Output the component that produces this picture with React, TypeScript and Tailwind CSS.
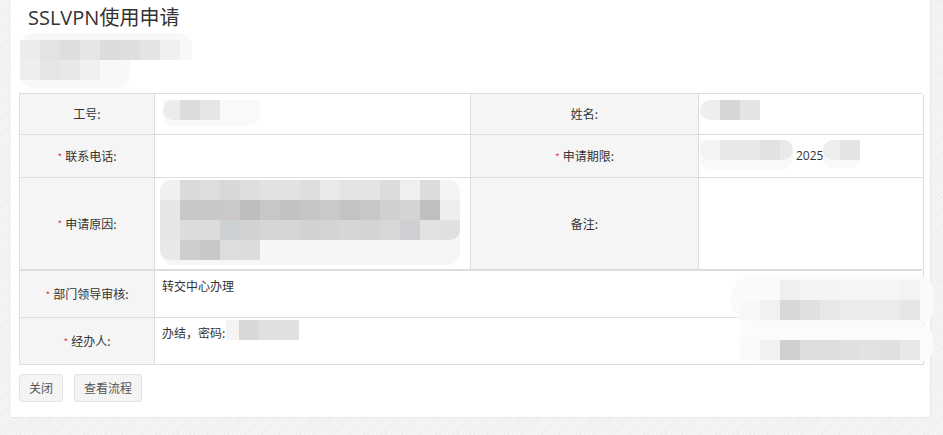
import clsx from "clsx";

// redacted areas are drawn as 20px mosaic tiles
type Cell = { c: string; w?: string };

const Strip = ({ cells, className }: { cells: Cell[]; className?: string }) => (
  <div className={clsx("flex h-[20px]", className)}>
    {cells.map((cell, i) => (
      <div key={i} className={clsx("h-[20px]", cell.w ?? "w-[20px]", cell.c)} />
    ))}
  </div>
);

const reasonRows: Cell[][] = [
  [
    { c: "bg-[#f0f0f0] rounded-tl-[10px]" }, { c: "bg-[#dadada]" }, { c: "bg-[#dcdddc]" }, { c: "bg-[#d8d8d8]" },
    { c: "bg-[#dddfdf]" }, { c: "bg-[#e2e2e2]" }, { c: "bg-[#e2e2e2]" }, { c: "bg-[#dedede]" },
    { c: "bg-[#e8eaea]" }, { c: "bg-[#e4e4e4]" }, { c: "bg-[#e4e4e4]" }, { c: "bg-[#dcdcda]" },
    { c: "bg-[#eef0f0]" }, { c: "bg-[#dcdcdc]" }, { c: "bg-[#f4f4f4] rounded-tr-[10px]" },
  ],
  [
    { c: "bg-[#e6e6e6]" }, { c: "bg-[#c8c8c8]" }, { c: "bg-[#c8c8c8]" }, { c: "bg-[#cac8c8]" },
    { c: "bg-[#bebcbc]" }, { c: "bg-[#c6c8c8]" }, { c: "bg-[#c2c0c0]" }, { c: "bg-[#c6c4c4]" },
    { c: "bg-[#c8cac8]" }, { c: "bg-[#c4c2c2]" }, { c: "bg-[#c8c8c8]" }, { c: "bg-[#d0d0d0]" },
    { c: "bg-[#d4d4d4]" }, { c: "bg-[#c0bebe]" }, { c: "bg-[#eeeef0]" },
  ],
  [
    { c: "bg-[#e6e6e6]" }, { c: "bg-[#dcdcdc]" }, { c: "bg-[#dcdcdc]" }, { c: "bg-[#cdd0d2]" },
    { c: "bg-[#d2d2d0]" }, { c: "bg-[#d6d6d6]" }, { c: "bg-[#d6d6d6]" }, { c: "bg-[#d2d2d2]" },
    { c: "bg-[#d4d4d4]" }, { c: "bg-[#d6d6d6]" }, { c: "bg-[#d2d4d6]" }, { c: "bg-[#d8d6d6]" },
    { c: "bg-[#d0ced2]" }, { c: "bg-[#e2e2e2]" }, { c: "bg-[#e0e0e0] rounded-br-[10px]" },
  ],
  [
    { c: "bg-[#e8e8e8] rounded-bl-[10px]" }, { c: "bg-[#cecece]" }, { c: "bg-[#c8c8c6]" },
    { c: "bg-[#dcdedc]" }, { c: "bg-[#dcdcdc]" },
  ],
];

const Label = ({ text, required }: { text: string; required?: boolean }) => (
  <div className="flex items-center justify-center border-r border-b border-[#dddddd] bg-[#f5f5f5] text-[12px] text-[#333]">
    {required && <span className="mr-[3px] text-[10px] text-[#e04848]">*</span>}
    {text}:
  </div>
);

export default function App() {
  return (
    <div className="min-h-screen bg-[repeating-linear-gradient(135deg,#eeeeee_0px,#eeeeee_1px,#f5f5f5_1px,#f5f5f5_3px)] pl-[11px] pr-[12px] font-['Noto_Sans_CJK_SC',sans-serif] text-[#333]">
      <div className="relative h-[418px] border-r border-b border-[#e8e8e8] bg-white px-[8px]">
        <h1 className="h-[33px] pl-[9px] pt-[4px] font-['Open_Sans','Noto_Sans_CJK_SC',sans-serif] text-[20px] leading-[28px] text-[#333]">
          SSLVPN使用申请
        </h1>

        <div className="h-[60px] pl-[1px]">
          <div className="w-[172px] rounded-t-[14px] bg-[#f8f8f8] pt-[7px]">
            <Strip
              cells={[
                { c: "bg-[#ececec]" }, { c: "bg-[#e3e3e3]" }, { c: "bg-[#dedede]" }, { c: "bg-[#e6e6e6]" },
                { c: "bg-[#dcdcdc]" }, { c: "bg-[#dedede]" }, { c: "bg-[#e4e4e4]" }, { c: "bg-[#f0f0f0]" },
              ]}
            />
          </div>
          <div className="w-[110px] rounded-b-[14px] bg-[#f8f8f8] pb-[8px]">
            <Strip cells={[{ c: "bg-[#eeeeee]" }, { c: "bg-[#e5e5e5]" }, { c: "bg-[#e8e8e8]" }, { c: "bg-[#f0f0f0]" }]} />
          </div>
        </div>

        <div className="grid grid-cols-[135px_316px_228px_225px] grid-rows-[41px_43px_92px] border-t border-l border-[#dddddd] text-[12px]">
          <Label text="工号" />
          <div className="border-r border-b border-[#dddddd] pl-[8px] pt-[6px]">
            <div className="inline-block rounded-b-[12px] bg-[#f9f9f9] pb-[6px] pr-[40px]">
              <Strip cells={[{ c: "bg-[#ececec] rounded-l-full", w: "w-[17px]" }, { c: "bg-[#dcdcdc]" }, { c: "bg-[#e6e6e6]" }]} />
            </div>
          </div>
          <Label text="姓名" />
          <div className="border-r border-b border-[#dddddd] pl-[1px] pt-[6px]">
            <Strip cells={[{ c: "bg-[#eeeeee] rounded-l-full" }, { c: "bg-[#d6d6d6]" }, { c: "bg-[#e4e4e4]" }]} />
          </div>

          <Label text="联系电话" required />
          <div className="border-r border-b border-[#dddddd]" />
          <Label text="申请期限" required />
          <div className="flex items-center border-r border-b border-[#dddddd] pl-[1px]">
            <div className="mb-[4px] self-start pt-[5px]">
              <div className="rounded-b-[12px] bg-[#f9f9f9] pb-[10px]">
                <Strip
                  cells={[
                    { c: "bg-[#f3f3f3] rounded-l-full" }, { c: "bg-[#e7e7e7]" }, { c: "bg-[#e7e7e7]" },
                    { c: "bg-[#e2e2e2]" }, { c: "bg-[#e9e9e9] rounded-r-full", w: "w-[13px]" },
                  ]}
                />
              </div>
            </div>
            <span className="ml-[3px] font-['Open_Sans',sans-serif] text-[12px]">2025</span>
            <div className="self-start pt-[5px]">
              <div className="rounded-[10px] bg-[#f9f9f9] pb-[8px]">
                <Strip cells={[{ c: "bg-[#eeeeee] rounded-l-full", w: "w-[17px]" }, { c: "bg-[#e4e4e4]" }]} />
              </div>
            </div>
          </div>

          <Label text="申请原因" required />
          <div className="border-r border-b border-[#dddddd] pl-[5px] pt-[2px]">
            <div className="inline-block rounded-[14px] bg-[#f6f6f6] pb-[5px]">
              {reasonRows.map((row, i) => (
                <Strip key={i} cells={row} />
              ))}
            </div>
          </div>
          <Label text="备注" />
          <div className="border-r border-b border-[#dddddd]" />
        </div>

        <div className="grid grid-cols-[135px_769px] grid-rows-[47px_47px] border-t border-l border-[#dddddd] text-[12px]">
          <Label text="部门领导审核" required />
          <div className="border-r border-b border-[#dddddd] pl-[7px] pt-[6px] leading-[18px]">转交中心办理</div>
          <Label text="经办人" required />
          <div className="flex items-start border-r border-b border-[#dddddd] pl-[7px] pt-[2px] leading-[18px]">
            <span className="mt-[4px]">办结，密码:</span>
            <Strip
              className="ml-[1px]"
              cells={[{ c: "bg-[#f4f4f4]", w: "w-[13px]" }, { c: "bg-[#d8d8d8]" }, { c: "bg-[#e0e0e0]", w: "w-[40px]" }]}
            />
          </div>
        </div>

        <div className="mt-[9px] flex gap-[11px]">
          <button className="h-[28px] rounded-[3px] border border-[#e3e3e3] bg-[#f4f4f4] px-[9px] text-[12px] text-[#555]">
            关闭
          </button>
          <button className="h-[28px] rounded-[3px] border border-[#e3e3e3] bg-[#f4f4f4] px-[9px] text-[12px] text-[#555]">
            查看流程
          </button>
        </div>

        {/* redaction smudges lying over the right end of the lower rows */}
        <div className="absolute left-[719px] top-[275px] h-[50px] w-[203px] rounded-l-[25px] rounded-r-[16px] bg-[#fafafa] pt-[5px]">
          <Strip
            className="ml-[50px]"
            cells={[
              { c: "bg-[#efefef]" }, { c: "bg-[#f3f3f3]" }, { c: "bg-[#f4f4f4]" },
              { c: "bg-[#f5f5f5]", w: "w-[60px]" }, { c: "bg-[#f3f3f3]" },
            ]}
          />
          <Strip
            className="ml-[10px]"
            cells={[
              { c: "bg-[#f8f8f8]" }, { c: "bg-[#f1f1f1]" }, { c: "bg-[#d8d8d8]" }, { c: "bg-[#e0e0e0]" },
              { c: "bg-[#e7e7e7]" }, { c: "bg-[#ebebeb]", w: "w-[60px]" }, { c: "bg-[#e6e6e6]" },
            ]}
          />
        </div>
        <div className="absolute left-[729px] top-[325px] h-[37px] w-[193px] rounded-r-[14px] rounded-bl-[18px] bg-[#fbfbfb] pt-[15px]">
          <Strip
            cells={[
              { c: "bg-[#fafafa]" }, { c: "bg-[#f1f1f1]" }, { c: "bg-[#d0d0d0]" }, { c: "bg-[#dddddd]" },
              { c: "bg-[#dedede]" }, { c: "bg-[#e0e0e0]" }, { c: "bg-[#e2e2e2]" }, { c: "bg-[#e0e0e0]" },
              { c: "bg-[#e8e8e8]" },
            ]}
          />
        </div>
      </div>
    </div>
  );
}
